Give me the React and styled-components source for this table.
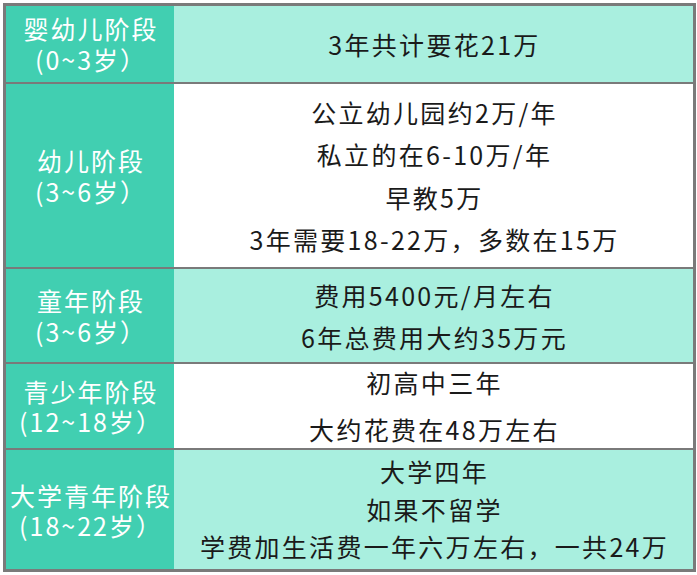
import React from "react";
import styled, { createGlobalStyle } from "styled-components";

const GlobalStyle = createGlobalStyle`
  body {
    margin: 0;
    background: #fff;
    font-family: "Noto Sans CJK SC", "Noto Sans", sans-serif;
  }
`;

const Page = styled.div`
  padding: 3px 1px 3px 3px;
  width: 697px;
  box-sizing: border-box;
`;

const Table = styled.div`
  display: grid;
  grid-template-columns: 168px 1fr;
  grid-template-rows: 76px 183px 93px 84px 119px;
  row-gap: 2px;
  border: 3px solid #7a7a7a;
  background: #7a7a7a;
`;

const StageCell = styled.div`
  background: #41cfb1;
  color: #fff;
  display: flex;
  flex-direction: column;
  align-items: center;
  justify-content: center;
  font-size: 25px;
  line-height: ${(p) => p.$lh || 31}px;
  letter-spacing: 2px;
  white-space: nowrap;
  text-indent: 2px;
`;

const CostCell = styled.div`
  background: ${(p) => (p.$tinted ? "#a9efdf" : "#fff")};
  color: #1a1a1a;
  display: flex;
  flex-direction: column;
  align-items: center;
  justify-content: center;
  font-size: 25px;
  line-height: ${(p) => p.$lh || 42}px;
  letter-spacing: 2.3px;
  white-space: nowrap;
  text-indent: 2px;
`;

const rows = [
  {
    stage: ["婴幼儿阶段", "(0~3岁）"],
    cost: ["3年共计要花21万"],
    tinted: true,
  },
  {
    stage: ["幼儿阶段", "(3~6岁）"],
    cost: [
      "公立幼儿园约2万/年",
      "私立的在6-10万/年",
      "早教5万",
      "3年需要18-22万，多数在15万",
    ],
    lh: 42.5,
  },
  {
    stage: ["童年阶段", "(3~6岁）"],
    cost: ["费用5400元/月左右", "6年总费用大约35万元"],
    tinted: true,
  },
  {
    stage: ["青少年阶段", "(12~18岁）"],
    cost: ["初高中三年", "大约花费在48万左右"],
    lh: 47,
    stageLh: 30,
  },
  {
    stage: ["大学青年阶段", "(18~22岁）"],
    cost: ["大学四年", "如果不留学", "学费加生活费一年六万左右，一共24万"],
    tinted: true,
    lh: 37.5,
    stageLh: 30,
  },
];

export default function App() {
  return (
    <>
      <GlobalStyle />
      <Page>
        <Table>
          {rows.map((row, i) => (
            <React.Fragment key={i}>
              <StageCell $lh={row.stageLh}>
                {row.stage.map((t) => (
                  <div key={t}>{t}</div>
                ))}
              </StageCell>
              <CostCell $tinted={row.tinted} $lh={row.lh}>
                {row.cost.map((t) => (
                  <div key={t}>{t}</div>
                ))}
              </CostCell>
            </React.Fragment>
          ))}
        </Table>
      </Page>
    </>
  );
}
